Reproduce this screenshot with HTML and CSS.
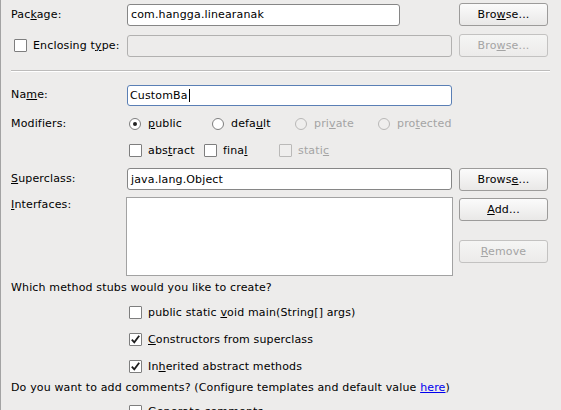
FILE: index.html
```html
<!DOCTYPE html>
<html>
<head>
<meta charset="utf-8">
<link rel="stylesheet" href="styles.css">
</head>
<body>
<div class="page">
  <div class="row r1">
    <div class="lbl"><span>Pac<u>k</u>age:</span></div>
    <div class="field w-pkg"><span>com.hangga.linearanak</span></div>
    <div class="btn"><span>Bro<u>w</u>se...</span></div>
  </div>
  <div class="row r2">
    <div class="lbl lbl-cb"><span class="cb cb-enc"></span><span>Enclosing t<u>y</u>pe:</span></div>
    <div class="field disabled w-full"></div>
    <div class="btn disabled"><span>Bro<u>w</u>se...</span></div>
  </div>
  <div class="sep"></div>
  <div class="row r3">
    <div class="lbl"><span>Na<u>m</u>e:</span></div>
    <div class="field focus w-full"><span>CustomBa</span><span class="caret"></span></div>
  </div>
  <div class="row r4">
    <div class="lbl"><span>Modifiers:</span></div>
    <div class="opts">
      <div class="opt radio-opt"><span class="rb on"></span><span><u>p</u>ublic</span></div>
      <div class="opt radio-opt"><span class="rb"></span><span>defa<u>u</u>lt</span></div>
      <div class="opt radio-opt dis"><span class="rb off"></span><span>pri<u>v</u>ate</span></div>
      <div class="opt radio-opt dis"><span class="rb off"></span><span>pro<u>t</u>ected</span></div>
    </div>
  </div>
  <div class="row r5">
    <div class="lbl"></div>
    <div class="opts">
      <div class="opt cb-opt"><span class="cb"></span><span>abs<u>t</u>ract</span></div>
      <div class="opt cb-opt"><span class="cb"></span><span>fina<u>l</u></span></div>
      <div class="opt cb-opt dis"><span class="cb off"></span><span>stati<u>c</u></span></div>
    </div>
  </div>
  <div class="row r6">
    <div class="lbl"><span><u>S</u>uperclass:</span></div>
    <div class="field w-full"><span>java.lang.Object</span></div>
    <div class="btn"><span>Brows<u>e</u>...</span></div>
  </div>
  <div class="row r7">
    <div class="lbl"><span><u>I</u>nterfaces:</span></div>
    <div class="list"></div>
    <div class="btncol">
      <div class="btn add"><span><u>A</u>dd...</span></div>
      <div class="btn disabled remove"><span><u>R</u>emove</span></div>
    </div>
  </div>
  <div class="text t1">Which method stubs would you like to create?</div>
  <div class="row cbrow first"><span class="cb"></span><span>public static <u>v</u>oid main(String[] args)</span></div>
  <div class="row cbrow"><span class="cb"><svg width="13" height="13" viewBox="0 0 13 13"><path d="M2.8 6.6 L5.3 9.4 L10.2 2.8" fill="none" stroke="#1e1e1e" stroke-width="1.8"/></svg></span><span><u>C</u>onstructors from superclass</span></div>
  <div class="row cbrow"><span class="cb"><svg width="13" height="13" viewBox="0 0 13 13"><path d="M2.8 6.6 L5.3 9.4 L10.2 2.8" fill="none" stroke="#1e1e1e" stroke-width="1.8"/></svg></span><span>In<u>h</u>erited abstract methods</span></div>
  <div class="text t2">Do you want to add comments? (Configure templates and default value <a class="link" href="#">here</a>)</div>
  <div class="row cbrow last"><span class="cb"></span><span><u>G</u>enerate comments</span></div>
</div>
</body>
</html>
```
FILE: styles.css
```css
html, body {
  margin: 0;
  padding: 0;
}
body {
  background: #edeceb;
  font-family: "DejaVu Sans", sans-serif;
  font-size: 11px;
  letter-spacing: 0.15px;
  color: #000;
}
.page {
  box-sizing: border-box;
  height: 410px;
  overflow: hidden;
  border-left: 1px solid #a3a3a3;
  padding: 3px 0 0 10px;
}
u {
  text-decoration: underline;
  text-underline-offset: 1px;
}
.row {
  display: flex;
  align-items: center;
  width: 537px;
}
.lbl {
  width: 116px;
  flex: none;
  line-height: 16px;
  display: flex;
  align-items: center;
}
.field {
  box-sizing: border-box;
  height: 22px;
  border: 1px solid #868686;
  border-radius: 3px;
  background: #fff;
  padding: 0 3px;
  display: flex;
  align-items: center;
  flex: none;
}
.w-pkg { width: 273px; }
.w-full { width: 325px; }
.field.disabled {
  background: #edeceb;
  border-color: #b2b1b0;
}
.field.focus {
  border-color: #5a7fb5;
  height: 21px;
  padding-left: 2px;
}
.caret {
  display: inline-block;
  width: 0;
  height: 13px;
  border-left: 1px solid #000;
  margin-left: 1px;
}
.btn {
  box-sizing: border-box;
  width: 89px;
  height: 23px;
  border: 1px solid #9c9b9a;
  border-radius: 3px;
  background: linear-gradient(#fbfbfb, #e9e8e7);
  display: flex;
  align-items: center;
  justify-content: center;
  margin-left: auto;
  flex: none;
}
.btn.disabled {
  color: #a4a4a4;
  border-color: #c3c2c1;
  background: linear-gradient(#f5f5f4, #ecebea);
}
.r1 { height: 23px; }
.r2 { height: 23px; margin-top: 8px; }
.cb-enc { margin-left: 3px; margin-right: 6px; }
.sep {
  margin-top: 13px;
  width: 539px;
  height: 0;
  border-top: 1px solid #bdbcbb;
  border-bottom: 1px solid #ffffff;
}
.r3 { height: 22px; margin-top: 12px; }
.r4 { height: 21px; margin-top: 7px; }
.r5 { height: 20px; margin-top: 6px; }
.r6 { height: 22px; margin-top: 8px; }
.r7 { margin-top: 7px; align-items: flex-start; }
.opts {
  display: flex;
  align-items: center;
  padding-left: 2px;
}
.opt {
  display: flex;
  align-items: center;
  flex: none;
}
.radio-opt { width: 83px; }
.cb-opt { width: 75px; }
.dis { color: #a4a4a4; }
.rb {
  box-sizing: border-box;
  width: 12px;
  height: 12px;
  border: 1px solid #7e7e7e;
  border-radius: 50%;
  background: #fff;
  margin-right: 7px;
  position: relative;
  flex: none;
}
.rb.on::after {
  content: "";
  position: absolute;
  left: 3px;
  top: 3px;
  width: 4px;
  height: 4px;
  border-radius: 50%;
  background: #222;
}
.rb.off {
  border-color: #b9b8b7;
  background: #efeeed;
}
.cb {
  box-sizing: border-box;
  width: 13px;
  height: 13px;
  border: 1px solid #7e7e7e;
  border-radius: 1px;
  background: #fff;
  margin-right: 6px;
  flex: none;
  position: relative;
}
.cb svg {
  position: absolute;
  left: -1px;
  top: -1px;
}
.cb.off {
  border-color: #bab9b8;
  background: #efeeed;
}
.list {
  box-sizing: border-box;
  width: 327px;
  height: 79px;
  margin-left: -1px;
  border: 1px solid #a2a2a2;
  background: #fff;
  flex: none;
}
.btncol {
  margin-left: auto;
  display: flex;
  flex-direction: column;
}
.add { margin-top: 1px; }
.remove { margin-top: 19px; }
.text {
  line-height: 16px;
}
.t1 { margin-top: 4px; }
.t2 { margin-top: 4px; }
.cbrow {
  height: 20px;
  padding-left: 118px;
  margin-top: 7px;
  box-sizing: border-box;
}
.cbrow.first { margin-top: 6px; }
.cbrow.last { margin-top: 5px; }
.link {
  color: #0000ee;
  text-decoration: underline;
}
```
